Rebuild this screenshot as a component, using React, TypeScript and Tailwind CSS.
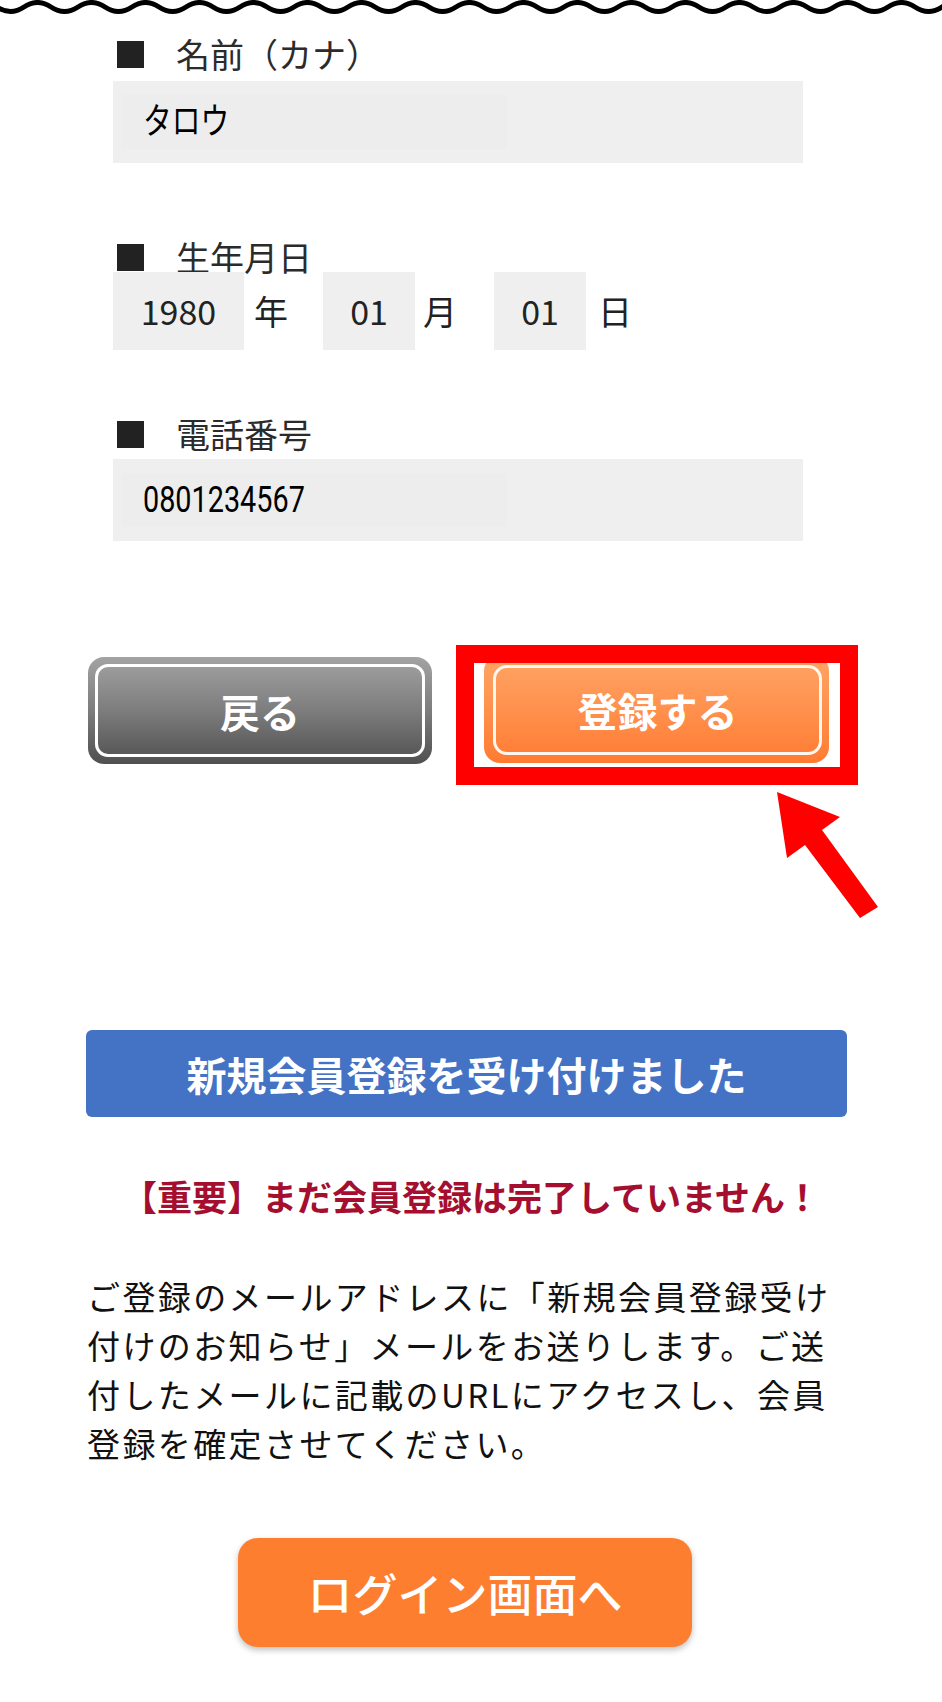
import React from 'react';

// ============================================
// Registration confirm - screenshot recreation
// ============================================

const Wave = () => {
  // squiggly torn-edge line across the top
  let d = 'M -30 7 q 13.5 -9 27 0';
  for (let i = 0; i < 40; i++) d += ' t 27 0';
  return (
    <svg width="942" height="15" viewBox="0 0 942 15" className="block">
      <path d={d} fill="none" stroke="#000" strokeWidth="5" />
    </svg>
  );
};

const Label = ({ text, className = '' }: { text: string; className?: string }) => (
  <div className={`flex items-center h-[30px] pl-[4px] ${className}`}>
    <span className="block w-[27px] h-[27px] bg-[#222]" />
    <span className="ml-[32px] text-[34px] leading-none text-[#2b2b2b]">{text}</span>
  </div>
);

const InputBox = ({ value, className = '' }: { value: string; className?: string }) => (
  <div className={`w-[690px] h-[82px] bg-[#efefef] flex items-center pl-[8px] ${className}`}>
    <div className="w-[386px] h-[54px] bg-[#ededed] flex items-center pl-[22px]">
      <span className="inline-block origin-left scale-x-[0.8] text-[36px] leading-none text-black font-['Roboto','Noto_Sans_CJK_JP',sans-serif]">
        {value}
      </span>
    </div>
  </div>
);

const Arrow = () => (
  <svg
    width="942"
    height="1702"
    viewBox="0 0 942 1702"
    className="absolute left-0 top-0 pointer-events-none"
  >
    <polygon
      points="777,792 840,817 822,830 878,907 860,918 805,845 787,858"
      fill="#ff0000"
    />
  </svg>
);

export default function App() {
  return (
    <div className="relative w-[942px] h-[1702px] bg-white overflow-hidden font-['Noto_Sans_CJK_JP','Noto_Sans',sans-serif]">
      <Wave />

      {/* form fields */}
      <div className="pl-[113px]">
        <Label text="名前（カナ）" className="mt-[24px]" />
        <InputBox value="タロウ" className="mt-[12px]" />

        <Label text="生年月日" className="mt-[79px]" />
        <div className="flex items-center h-[78px] text-[34px] leading-none text-[#222]">
          <div className="w-[131px] h-full bg-[#efefef] flex items-center justify-center">1980</div>
          <span className="ml-[10px]">年</span>
          <div className="ml-[35px] w-[92px] h-full bg-[#efefef] flex items-center justify-center">01</div>
          <span className="ml-[8px]">月</span>
          <div className="ml-[37px] w-[92px] h-full bg-[#efefef] flex items-center justify-center">01</div>
          <span className="ml-[12px]">日</span>
        </div>

        <Label text="電話番号" className="mt-[69px]" />
        <InputBox value="0801234567" className="mt-[10px]" />
      </div>

      {/* back / register buttons */}
      <div className="flex items-start pl-[88px] mt-[104px]">
        <div className="mt-[12px] w-[344px] h-[107px] rounded-[16px] bg-linear-to-b from-[#a3a3a3] via-[#7d7d7d] to-[#505050] p-[7px]">
          <div className="h-full rounded-[13px] border-[3px] border-white flex items-center justify-center">
            <span className="text-[40px] font-bold leading-none text-white">戻る</span>
          </div>
        </div>

        <div className="ml-[24px] w-[402px] h-[140px] border-[18px] border-[#ff0000] bg-white overflow-hidden">
          <div className="ml-[10px] mt-[-8px] w-[345px] h-[108px] rounded-[16px] bg-linear-to-b from-[#ffa565] to-[#ff7b31] pt-[10px] pb-[8px] pl-[9px] pr-[7px]">
            <div className="h-full rounded-[14px] border-[3px] border-[#fff6ee] flex items-center justify-center">
              <span className="text-[40px] font-bold leading-none text-white">登録する</span>
            </div>
          </div>
        </div>
      </div>

      {/* result message */}
      <div className="ml-[86px] w-[761px] mt-[245px]">
        <div className="h-[87px] rounded-[6px] bg-[#4472c4] flex items-center justify-center">
          <span className="text-[40px] font-bold leading-none text-white">新規会員登録を受け付けました</span>
        </div>
      </div>

      <div className="mt-[58px] h-[40px] flex items-center justify-center">
        <span className="text-[35px] font-bold leading-none text-[#a50e2e]">【重要】まだ会員登録は完了していません！</span>
      </div>

      <p className="ml-[87px] mt-[57px] whitespace-nowrap text-[33px] tracking-[2.4px] leading-[49px] text-[#111]">
        ご登録のメールアドレスに「新規会員登録受け
        <br />
        付けのお知らせ」メールをお送りします。ご送
        <br />
        付したメールに記載のURLにアクセスし、会員
        <br />
        登録を確定させてください。
      </p>

      <div className="ml-[238px] mt-[70px] w-[454px] h-[109px] rounded-[20px] bg-[#fd7e2f] shadow-[0_3px_6px_rgba(0,0,0,0.25)] flex items-center justify-center">
        <span className="text-[45px] font-medium leading-none text-white">ログイン画面へ</span>
      </div>

      <Arrow />
    </div>
  );
}
